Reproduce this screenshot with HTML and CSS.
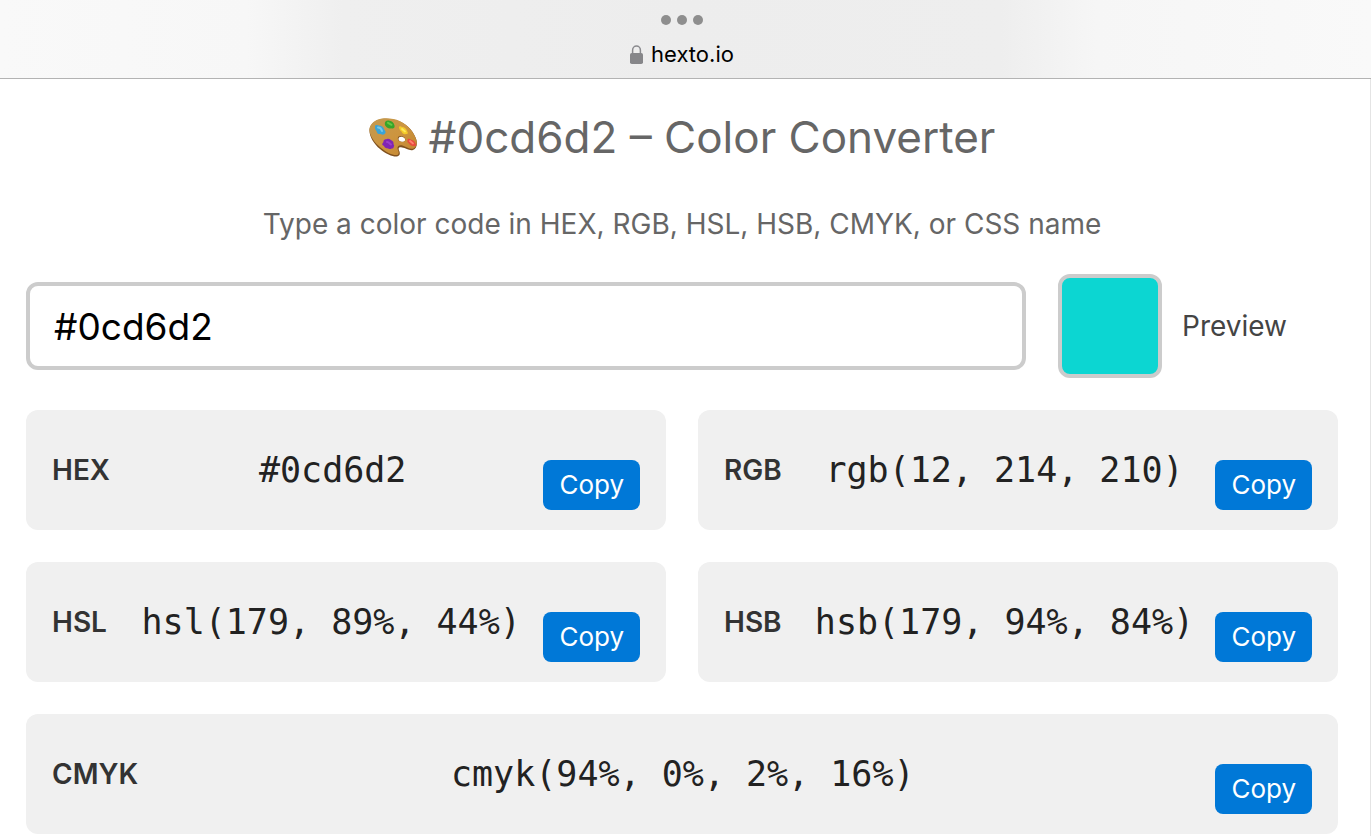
FILE: index.html
```html
<!DOCTYPE html>
<html lang="en">
<head>
<meta charset="UTF-8">
<meta name="viewport" content="width=device-width, initial-scale=1.0">
<title>#0cd6d2 – Color Converter</title>
<link rel="stylesheet" href="styles.css">
</head>
<body>
<!-- Browser bar -->
<header class="browser-bar">
    <svg class="dots" width="42" height="10" viewBox="0 0 42 10" aria-hidden="true">
        <circle cx="5" cy="5" r="5"/>
        <circle cx="21" cy="5" r="5"/>
        <circle cx="37" cy="5" r="5"/>
    </svg>
    <div class="address">
        <svg class="lock" width="13" height="19" viewBox="0 0 13 19" aria-hidden="true">
            <path d="M2.6 9V5.2a3.9 4.2 0 0 1 7.800 0V9" fill="none" stroke="#8a8a8e" stroke-width="1.5"/>
            <rect y="8" width="13" height="11" rx="1.8" fill="#868689"/>
        </svg>
        <span>hexto.io</span>
    </div>
</header>

<main class="page">
    <h1 class="title">
        <svg class="palette" width="48" height="40" viewBox="0 0 48 40" aria-hidden="true">
            <defs>
                <linearGradient id="wood" x1="0" y1="0" x2="1" y2="1">
                    <stop offset="0" stop-color="#c39a50"/>
                    <stop offset=".5" stop-color="#cd953f"/>
                    <stop offset="1" stop-color="#c2842f"/>
                </linearGradient>
            </defs>
            <path fill-rule="evenodd" d="M.5 12.500C0 19 5 27 11 32C17 37 24 40 28 39.500C31 39 31.500 36 30 33.500C29 31 30 29.500 33 30.500C37 31 40 34 44 33C47.500 32 48.500 27.500 47.500 23C45 15 39 8 31 4.500C24 1.500 15 1 9 3C4 5 1 8.500 .5 12.500ZM29.500 22C29.500 20 31.500 19.500 33.500 20C35.500 20.500 36.500 22 36 23.500C35.500 25 34 25 32.500 24.700C30.500 24.500 29.500 23.500 29.500 22Z" fill="#80511f"/>
            <path fill-rule="evenodd" d="M.5 12C0 18 5 25.500 12 31C18 36 24 38.500 28 38C30 37.500 30.200 35.500 29 33C27.500 30 29.500 27.500 33.500 28.500C37 29.500 40.500 32.500 44 31.700C47.500 30.500 48.500 27 47 22C44.500 14.500 38.500 8 31 4.200C24 1 15 .5 9 2.500C4 4.500 1 8 .5 12ZM28.800 21.500C28.800 19.500 30.500 18.800 33 19.200C35.300 19.600 36.600 21.500 36.200 23C35.500 25 34 25.200 32.200 24.800C30.300 24.400 28.800 23.300 28.800 21.500Z" fill="url(#wood)"/>
            <path d="M6 10.500C5.500 8 7.500 7.500 9.500 8.500C12.500 8.500 15 10.500 15.500 13C17 14.500 17 16 15.500 17C14 18.500 12 17 10.500 17C8 17 8 15 7.500 14C6.500 13 6 12 6 10.500Z" fill="#3ba4d6"/>
            <path d="M9 10.500C11 10.500 12.500 12 13 14" fill="none" stroke="#76c9e8" stroke-width="2" stroke-linecap="round"/>
            <path d="M16 5.500C16.500 3.500 18.500 3 20.500 3.700C23 3.700 25 6 25.500 8.500C26 11 24.500 12 22 11.300C19.500 12 18 10.500 17 9.500C16 8.500 15.500 7 16 5.500Z" fill="#36a52a"/>
            <path d="M19 5.800L22.500 7.800" fill="none" stroke="#68c843" stroke-width="2" stroke-linecap="round"/>
            <path d="M30 11C29.500 9 31.500 8.500 33 10C35.500 10 37.500 12 38 14C39.500 16 39 17.500 37 17C34.500 18 33 16 32.500 14.500C31 13.500 30.500 12.500 30 11Z" fill="#f3c929"/>
            <path d="M33 12L36 14.500" fill="none" stroke="#fde95b" stroke-width="1.800" stroke-linecap="round"/>
            <path d="M38.500 23C38.500 21.500 40.500 21.500 42 22.700C44.500 23 46 24.500 46.500 26.500C48 28.500 46.500 29.500 45 29C42.500 29.500 41 28 40 26.500C38.500 25.500 38 24.500 38.500 23Z" fill="#e74b3e"/>
            <path d="M41 24L44 26.500" fill="none" stroke="#ff8170" stroke-width="1.800" stroke-linecap="round"/>
            <path d="M14.500 24.500C14.500 22 17 22.500 18.500 21.700C21 21.500 22 23 24 24.500C25 26 24 27 25.200 28.500C24.500 30 25 32 22.500 31.500C21 33 19.500 31 18 31.200C15.500 31.500 16 29 13.500 28C12.500 26.500 14.500 26 14.500 24.500Z" fill="#8125b4"/>
            <path d="M18 25C20 24.500 20.500 27 22 27.500" fill="none" stroke="#9b3dcb" stroke-width="2" stroke-linecap="round"/>
        </svg>
        <span>#0cd6d2 – Color Converter</span>
    </h1>
    <label class="hint" for="color">Type a color code in HEX, RGB, HSL, HSB, CMYK, or CSS name</label>

    <div class="input-row">
        <input class="color-input" id="color" type="text" value="#0cd6d2" spellcheck="false">
        <div class="preview">
            <div class="swatch"></div>
            <span>Preview</span>
        </div>
    </div>

    <!-- Converted values -->
    <div class="results">
        <div class="result">
            <span class="format">HEX</span>
            <code class="value">#0cd6d2</code>
            <button class="copy" type="button">Copy</button>
        </div>
        <div class="result">
            <span class="format">RGB</span>
            <code class="value">rgb(12, 214, 210)</code>
            <button class="copy" type="button">Copy</button>
        </div>
        <div class="result">
            <span class="format">HSL</span>
            <code class="value">hsl(179, 89%, 44%)</code>
            <button class="copy" type="button">Copy</button>
        </div>
        <div class="result">
            <span class="format">HSB</span>
            <code class="value">hsb(179, 94%, 84%)</code>
            <button class="copy" type="button">Copy</button>
        </div>
        <div class="result result-wide">
            <span class="format">CMYK</span>
            <code class="value">cmyk(94%, 0%, 2%, 16%)</code>
            <button class="copy" type="button">Copy</button>
        </div>
    </div>
</main>
</body>
</html>
```
FILE: styles.css
```css
* {
    box-sizing: border-box;
}

body {
    margin: 0;
    background: #fff;
    color: #444;
    font-family: Inter, "Liberation Sans", sans-serif;
    font-size: 28px;
}

/* Browser bar */
.browser-bar {
    display: flex;
    flex-direction: column;
    align-items: center;
    gap: 14px;
    padding: 15px 7px 9px 0;
    border-bottom: 1px solid #b3b3b3;
    background: linear-gradient(90deg, #f9f9f9 0%, #f7f7f7 18%, #efefef 25%, #ededed 50%, #eee 73%, #f6f6f6 80%, #f9f9f9 100%);
}

.dots {
    fill: #8e8e8e;
}

.address {
    display: flex;
    align-items: center;
    gap: 8px;
    color: #000;
    font-size: 22px;
    line-height: 30px;
}

/* Page */
.page {
    padding: 28px 32px 2px 26px;
    border-right: 1px solid #e4e4e4;
}

.title {
    display: flex;
    justify-content: center;
    align-items: center;
    gap: 12px;
    margin: 0;
    color: #666;
    font-size: 44px;
    font-weight: 400;
    line-height: 60px;
}

.hint {
    display: block;
    margin: 39px 0 32px;
    color: #666;
    line-height: 36px;
    text-align: center;
}

.input-row {
    display: flex;
    align-items: center;
    gap: 32px;
}

.color-input {
    flex: 1;
    min-width: 0;
    height: 88px;
    padding: 0 24px;
    border: 4px solid #ccc;
    border-radius: 12px;
    background: #fff;
    color: #000;
    font-family: inherit;
    font-size: 37px;
}

.preview {
    display: flex;
    align-items: center;
    gap: 20px;
    width: 280px;
}

.swatch {
    width: 104px;
    height: 104px;
    border: 4px solid #ccc;
    border-radius: 12px;
    background: #0cd6d2;
}

/* Results */
.results {
    display: grid;
    grid-template-columns: 1fr 1fr;
    gap: 32px;
    margin-top: 32px;
}

.result {
    display: flex;
    align-items: center;
    padding: 20px 26px;
    border-radius: 12px;
    background: #f0f0f0;
}

.result-wide {
    grid-column: 1 / -1;
}

.format {
    margin-right: 12px;
    color: #333;
    font-weight: 600;
}

.value {
    flex: 1;
    color: #222;
    font-family: "DejaVu Sans Mono", monospace;
    font-size: 35px;
    text-align: center;
    white-space: nowrap;
}

.copy {
    height: 50px;
    margin-top: 30px;
    padding: 0 16px 2px;
    border: none;
    border-radius: 8px;
    background: #0078d7;
    color: #fff;
    font-family: inherit;
    font-size: 26px;
    cursor: pointer;
}

@media (max-width: 900px) {
    .results {
        grid-template-columns: 1fr;
    }

    .input-row {
        flex-wrap: wrap;
    }
}
```
